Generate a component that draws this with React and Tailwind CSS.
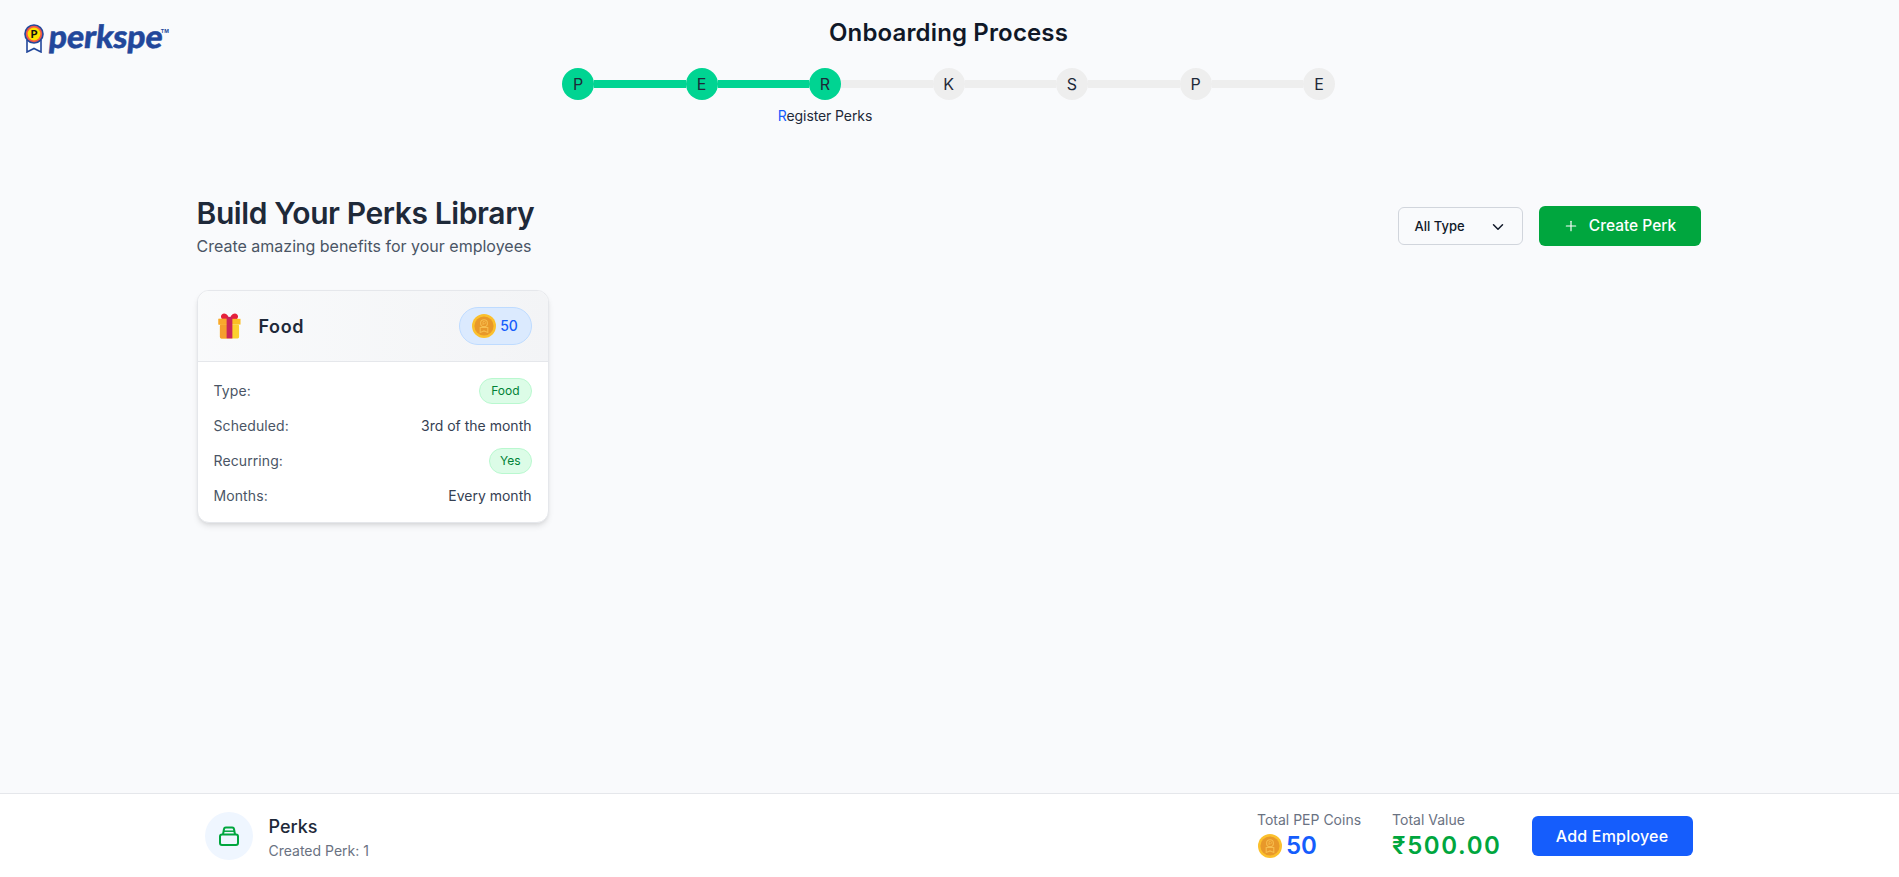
import React from "react";
import { ChevronDown, Plus } from "lucide-react";

const font = { fontFamily: '"Inter", "Liberation Sans", sans-serif' };

function Coin({ className }) {
  return (
    <svg viewBox="0 0 24 24" className={className}>
      <circle cx="12" cy="12" r="12" fill="#fbc02d" />
      <circle cx="12" cy="12" r="9.6" fill="#e8982a" />
      <circle cx="12" cy="9.2" r="3.4" fill="none" stroke="#f6bd4e" strokeWidth="1.1" />
      <path d="M8.2 13.5h7.6v5l-3.8-1.6-3.8 1.6z" fill="none" stroke="#f6bd4e" strokeWidth="1.1" />
      <path d="M11 11V7.6h1.5a1.1 1.1 0 0 1 0 2.2H11" fill="none" stroke="#f6bd4e" strokeWidth="0.8" />
    </svg>
  );
}

function Gift() {
  return (
    <svg viewBox="0 0 24 27" className="w-[23px] h-[26px]">
      <path d="M4 1.5c2-1.8 5-1 7 2.5h2c2-3.500 5-4.300 7-2.500 1.600 1.600 1 4-1 5.500H5C3 5.500 2.400 3.100 4 1.500z" fill="#e5213a" />
      <rect x="0.500" y="6" width="23" height="6" fill="#fbbf24" />
      <rect x="2" y="12" width="20" height="14.500" rx="1.500" fill="#fcd02e" />
      <rect x="2" y="12" width="8" height="14.500" rx="1.500" fill="#f59e2d" />
      <rect x="0.500" y="6" width="9" height="6" fill="#f9a72c" />
      <rect x="9" y="4" width="6" height="22.500" fill="#c9245a" />
    </svg>
  );
}

function Logo() {
  return (
    <div className="flex items-center h-[28px] w-[146px]">
      <svg viewBox="0 0 20 29" className="w-[20px] h-[29px] shrink-0">
        <path d="M3 16v12l7-3.500 7 3.500V16" fill="#fff" stroke="#22479b" strokeWidth="1.600" />
        <circle cx="10" cy="10" r="9.800" fill="#22479b" />
        <circle cx="10" cy="10" r="8.200" fill="#f2574a" />
        <circle cx="10" cy="10" r="6.400" fill="#ffe100" />
        <text x="10" y="14" textAnchor="middle" fontSize="11" fontWeight="900" fill="#111" style={{ fontFamily: '"Lato", sans-serif' }}>P</text>
      </svg>
      <span
        className="ml-[5px] inline-block -skew-x-6 text-[32px] leading-none font-black text-[#22479b] tracking-[-0.1px] mt-[-5px] [-webkit-text-stroke:0.5px_#22479b]"
        style={{ fontFamily: '"Lato", sans-serif' }}
      >
        perkspe
      </span>
      <span className="self-start mt-[5px] -ml-[2px] text-[5px] leading-none font-bold text-[#22479b]" style={font}>TM</span>
    </div>
  );
}

const steps = ["P", "E", "R", "K", "S", "P", "E"];

function Stepper() {
  return (
    <div className="flex w-[773px] mt-[19px]">
      {steps.map((s, i) => (
        <React.Fragment key={i}>
          <div className="flex flex-col items-center w-8 shrink-0">
            <div className={`w-8 h-8 rounded-full flex items-center justify-center text-base text-gray-800 ${i <= 2 ? "bg-[#00d492]" : "bg-[#eeeeee]"}`}>
              {s}
            </div>
            {i === 2 ? (
              <div className="mt-[6px] text-sm leading-5 whitespace-nowrap text-gray-800 tracking-[-0.1px]">
                <span className="text-[#155dfc]">R</span>egister Perks
              </div>
            ) : null}
          </div>
          {i < 6 ? <div className={`flex-1 h-2 mt-3 ${i < 2 ? "bg-[#00d492]" : "bg-[#eeeeee]"}`} /> : null}
        </React.Fragment>
      ))}
    </div>
  );
}

function Row({ label, children }) {
  return (
    <div className="flex items-center justify-between">
      <span className="text-sm leading-5 text-gray-600 tracking-[0.1px]">{label}</span>
      {children}
    </div>
  );
}

function Pill({ narrow, children }) {
  return (
    <span className={`h-[26px] ${narrow ? "px-[10px]" : "px-[11px]"} rounded-full bg-[#dcfce7] border border-[#b9f8cf] text-xs font-normal text-[#008236] flex items-center`}>
      {children}
    </span>
  );
}

function Card() {
  return (
    <div className="rounded-xl border border-gray-200 bg-white shadow-md overflow-hidden">
      <div className="h-[71px] px-4 flex items-center justify-between bg-gradient-to-r from-gray-50 to-gray-100 border-b border-gray-200">
        <div className="flex items-center gap-[18px] pl-[4px]">
          <Gift />
          <span className="text-lg font-semibold text-gray-800 tracking-[0.6px] mt-px">Food</span>
        </div>
        <div className="h-[38px] w-[73px] rounded-full bg-[#dbeafe] border border-[#bedbff] flex items-center justify-center gap-1">
          <Coin className="w-6 h-6" />
          <span className="text-sm font-medium text-[#155dfc]">50</span>
        </div>
      </div>
      <div className="p-4 flex flex-col gap-3">
        <Row label="Type:"><Pill>Food</Pill></Row>
        <Row label="Scheduled:"><span className="text-sm text-gray-700">3rd of the month</span></Row>
        <Row label="Recurring:"><Pill narrow>Yes</Pill></Row>
        <Row label="Months:"><span className="text-sm text-gray-700">Every month</span></Row>
      </div>
    </div>
  );
}

export default function App() {
  return (
    <div className="h-[877px] flex flex-col bg-[#f9fafc] overflow-hidden" style={font}>
      <header className="flex flex-col items-center pt-[17px] pr-[2px] relative h-[194px] shrink-0">
        <div className="absolute left-[24px] top-[24px]"><Logo /></div>
        <h1 className="text-2xl leading-8 font-semibold text-gray-900 tracking-[0.15px]">Onboarding Process</h1>
        <Stepper />
      </header>
      <main className="flex-1 w-[1536px] ml-[180.5px] px-4">
        <div className="flex items-start justify-between">
          <div>
            <h2 className="text-3xl leading-9 pt-px font-semibold text-gray-800 tracking-[-0.4px]">Build Your Perks Library</h2>
            <p className="mt-[3px] text-base leading-6 text-gray-600">Create amazing benefits for your employees</p>
          </div>
          <div className="flex items-center gap-4 mt-3">
            <button className="w-[125px] h-[38px] pl-4 pr-[15px] pt-px flex items-center justify-between rounded-md border border-gray-300 text-[13px] font-medium text-gray-900">
              All Type
              <ChevronDown className="w-[18px] h-[18px]" strokeWidth={2} />
            </button>
            <button className="w-[162px] h-10 flex items-center justify-center gap-[10px] rounded-md bg-[#00a63e] text-[15.5px] font-medium text-white">
              <Plus className="w-4 h-4" strokeWidth={1.75} />
              Create Perk
            </button>
          </div>
        </div>
        <div className="grid grid-cols-4 gap-8 mt-8">
          <Card />
        </div>
      </main>
      <footer className="h-[84px] shrink-0 bg-white border-t border-gray-200">
        <div className="w-[1536px] h-full ml-[180.5px] px-6 flex items-center justify-between">
          <div className="flex items-center gap-4">
            <div className="w-12 h-12 rounded-full bg-[#eff6ff] flex items-center justify-center">
              <svg viewBox="0 0 20 20" className="w-5 h-5" fill="none" stroke="#00a63e" strokeWidth="2" strokeLinejoin="round">
                <rect x="1" y="8.500" width="18" height="10.500" rx="2" />
                <path d="M4 8.500l1-5.500a1.800 1.800 0 0 1 1.800-1.500h6.400A1.800 1.800 0 0 1 15 3l1 5.500" />
                <path d="M4.500 5.200h11" strokeWidth="1.500" />
              </svg>
            </div>
            <div className="pt-[2px]">
              <div className="text-lg leading-7 font-medium text-gray-800">Perks</div>
              <div className="text-sm leading-5 text-gray-500">Created Perk: 1</div>
            </div>
          </div>
          <div className="flex items-center gap-[30px]">
            <div className="mr-px">
              <div className="text-sm leading-5 text-gray-500">Total PEP Coins</div>
              <div className="flex items-center gap-1 h-8 pt-px">
                <Coin className="w-6 h-6 ml-px" />
                <span className="text-2xl font-semibold text-[#155dfc]">50</span>
              </div>
            </div>
            <div>
              <div className="text-sm leading-5 text-gray-500">Total Value</div>
              <div className="h-8 pt-px flex items-center text-2xl font-semibold text-[#00a63e] tracking-[1.6px]">₹500.00</div>
            </div>
            <button className="w-[161px] h-10 rounded-md bg-[#155dfc] text-base font-medium text-white tracking-[0.2px]">Add Employee</button>
          </div>
        </div>
      </footer>
    </div>
  );
}
